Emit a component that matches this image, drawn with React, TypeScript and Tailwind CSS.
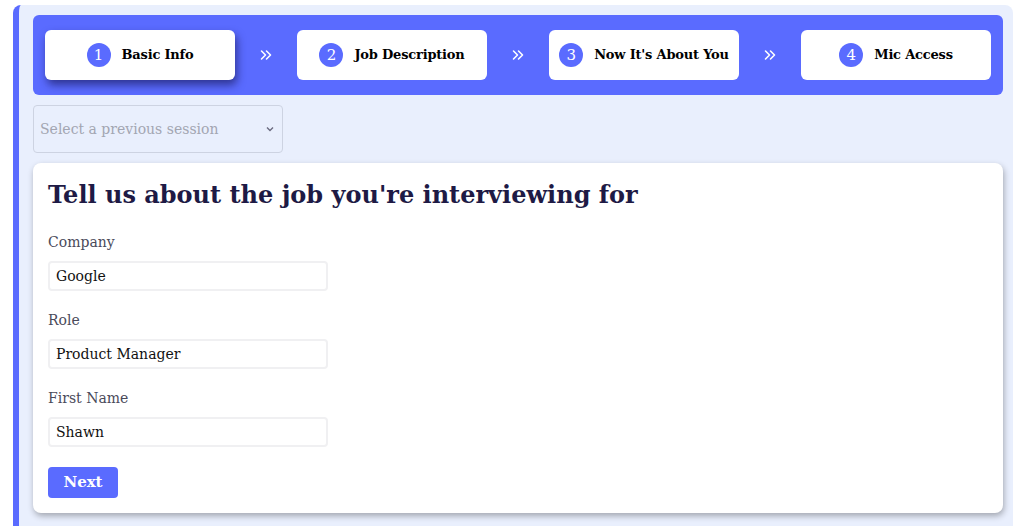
import React from "react";

const serif = { fontFamily: '"DejaVu Serif", "Liberation Serif", serif' };

function Step({ n, label, active }: { n: number; label: string; active?: boolean }) {
  return (
    <div
      className={
        "flex h-[50px] min-w-[190px] items-center justify-center gap-[11px] whitespace-nowrap rounded-md bg-white px-[10px] " +
        (active ? "shadow-[2px_5px_8px_rgba(25,25,90,0.65)]" : "")
      }
    >
      <span className="flex h-[24px] w-[24px] shrink-0 items-center justify-center rounded-full bg-[#5a6bff] text-[15px] leading-none text-white">
        {n}
      </span>
      <span className="text-[13px] font-bold tracking-[-0.2px] text-black">{label}</span>
    </div>
  );
}

function Chevrons() {
  return (
    <div className="flex w-[60px] shrink-0 justify-center">
      <svg width="14" height="14" viewBox="0 0 14 14" fill="none" stroke="white" strokeWidth="1.6" strokeLinecap="round" strokeLinejoin="round">
        <path d="M2.5 3l4 4-4 4" />
        <path d="M7.5 3l4 4-4 4" />
      </svg>
    </div>
  );
}

function Field({ label, value }: { label: string; value: string }) {
  return (
    <div>
      <div className="text-[14px] leading-[20px] text-[#4a4a5a]">{label}</div>
      <div className="mt-[9px] flex h-[30px] w-[280px] items-center rounded border-2 border-[#f0f0f2] px-[6px] text-[14px] text-[#111]">
        {value}
      </div>
    </div>
  );
}

export default function App() {
  return (
    <div className="min-h-screen bg-white pl-[13px] pr-[8px] pt-[5px]" style={serif}>
      <div className="min-h-[521px] rounded-t-lg border-l-[6px] border-[#5a6bff] bg-[#e9effd] pl-[14px] pr-[10px] pt-[10px]">
        <div className="flex h-[80px] items-center justify-between rounded-md bg-[#5a6bff] px-[12px]">
          <Step n={1} label="Basic Info" active />
          <Chevrons />
          <Step n={2} label="Job Description" />
          <Chevrons />
          <Step n={3} label="Now It's About You" />
          <Chevrons />
          <Step n={4} label="Mic Access" />
        </div>

        <div className="mt-[10px] flex h-[48px] w-[250px] items-center justify-between rounded border border-[#cdd3e2] pl-[6px] pr-[8px]">
          <span className="text-[14px] text-[#a3a6b2]">Select a previous session</span>
          <svg width="8" height="6" viewBox="0 0 8 6" fill="none" stroke="#6b6b80" strokeWidth="1.4">
            <path d="M1 1.5l3 3 3-3" />
          </svg>
        </div>

        <div className="mt-[10px] rounded-lg bg-white px-[15px] pb-[15px] pt-[16px] shadow-[1px_3px_6px_rgba(0,0,0,0.3)]">
          <h1 className="text-[24px] font-bold leading-[32px] text-[#1e1a45]">
            Tell us about the job you're interviewing for
          </h1>
          <div className="mt-[21px] flex flex-col gap-[19px]">
            <Field label="Company" value="Google" />
            <Field label="Role" value="Product Manager" />
            <Field label="First Name" value="Shawn" />
          </div>
          <button className="mt-[20px] flex h-[31px] w-[70px] items-center justify-center rounded bg-[#5a6bff] text-[15px] font-bold text-white">
            Next
          </button>
        </div>
      </div>
    </div>
  );
}
